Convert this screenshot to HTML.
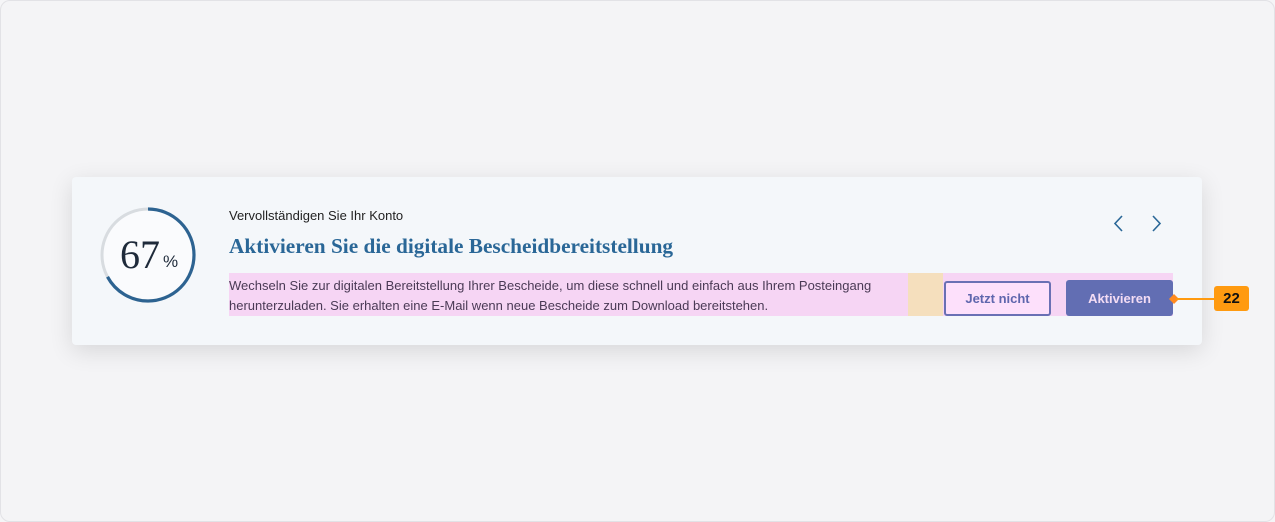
<!DOCTYPE html>
<html><head><style>
body{margin:0;width:1275px;height:522px;background:#f5f5f7;font-family:"Liberation Sans",sans-serif;position:relative;overflow:hidden}
.frame{position:absolute;left:0;top:0;width:1273px;height:520px;border:1px solid #e2e2e6;border-radius:10px;background:#f4f4f6}
.card{position:absolute;left:72px;top:177px;width:1130px;height:168px;background:#f4f7fa;border-radius:4px;box-shadow:0 6px 24px rgba(0,0,0,.12)}
.abs{position:absolute}
.sub{left:229px;top:208px;font-size:13px;color:#222}
.title{left:229px;top:234px;font-family:"Liberation Serif",serif;font-weight:bold;font-size:21.3px;color:#2a6797}
.pink{left:229px;top:273px;width:944px;height:43px;background:#f6d5f4}
.beige{left:908px;top:273px;width:35px;height:43px;background:#f5dfbd}
.txt{left:229px;top:276px;font-size:13px;line-height:20px;color:#4a3a55;width:680px}
.btn{top:281px;height:35px;box-sizing:border-box;border-radius:3px;font-size:13px;font-weight:bold;display:flex;align-items:center;justify-content:center}
.b1{left:944px;width:107px;background:#fde0fb;border:2px solid #6a70b4;color:#5f66ad}
.b2{left:1066px;width:107px;background:#626eb3;color:#f3dcf4;top:280px;height:36px}
.badge{left:1214px;top:286px;width:35px;height:25px;background:#ff9a10;border-radius:3px;font-weight:bold;font-size:15px;color:#111;display:flex;align-items:center;justify-content:center}
</style></head><body>
<div class="frame"></div>
<div class="card"></div>
<svg class="abs" style="left:98px;top:205px" width="100" height="100">
<circle cx="50" cy="50" r="46" fill="#fafbfd"/>
<circle cx="50" cy="50" r="46" fill="none" stroke="#d8dce0" stroke-width="3"/>
<circle cx="50" cy="50" r="46" fill="none" stroke="#2d6391" stroke-width="3.2" stroke-dasharray="193.7 289" transform="rotate(-90 50 50)"/>
<text x="22" y="63" font-family="Liberation Serif,serif" font-size="40" fill="#1e2a3a">67</text>
<text x="65" y="62" font-family="Liberation Sans,sans-serif" font-size="17" fill="#1e2a3a">%</text>
</svg>
<div class="abs sub">Vervollständigen Sie Ihr Konto</div>
<div class="abs title">Aktivieren Sie die digitale Bescheidbereitstellung</div>
<div class="abs pink"></div>
<div class="abs beige"></div>
<div class="abs txt">Wechseln Sie zur digitalen Bereitstellung Ihrer Bescheide, um diese schnell und einfach aus Ihrem Posteingang herunterzuladen. Sie erhalten eine E-Mail wenn neue Bescheide zum Download bereitstehen.</div>
<div class="abs btn b1">Jetzt nicht</div>
<div class="abs btn b2">Aktivieren</div>
<svg class="abs" style="left:1110px;top:214px" width="60" height="20"><path d="M12 2 L5 9.5 L12 17" fill="none" stroke="#2a6797" stroke-width="1.6"/><path d="M43 2 L50 9.5 L43 17" fill="none" stroke="#2a6797" stroke-width="1.6"/></svg>
<svg class="abs" style="left:1168px;top:292px" width="48" height="14"><path d="M6 2 L11 7 L6 12 L1 7Z" fill="#ff8a20"/><line x1="8" y1="7" x2="48" y2="7" stroke="#ff9a10" stroke-width="2"/></svg>
<div class="abs badge">22</div>
</body></html>
